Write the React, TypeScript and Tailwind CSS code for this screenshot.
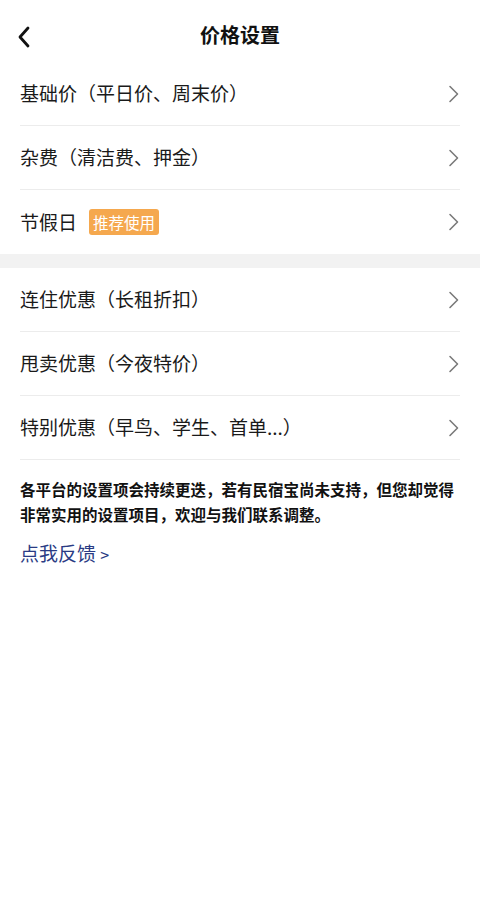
import { ReactNode } from "react";

const font = {
  fontFamily: '"Noto Sans CJK SC", "Noto Sans", sans-serif',
};

function Chevron() {
  return (
    <svg width="12" height="18" viewBox="0 0 12 18" fill="none">
      <path
        d="M2 1.5 L9.5 9 L2 16.5"
        stroke="#7a7a7a"
        strokeWidth="1.6"
        strokeLinecap="round"
        strokeLinejoin="round"
      />
    </svg>
  );
}

function Row({ children, last }: { children: ReactNode; last?: boolean }) {
  return (
    <div className="px-5">
      <div
        className={`flex h-16 items-center justify-between ${
          last ? "" : "border-b border-[#ececec]"
        }`}
      >
        <div className="flex items-center text-[19px] text-[#1a1a1a]">
          {children}
        </div>
        <Chevron />
      </div>
    </div>
  );
}

export default function App() {
  const groupA = ["基础价（平日价、周末价）", "杂费（清洁费、押金）"];
  const groupB = [
    "连住优惠（长租折扣）",
    "甩卖优惠（今夜特价）",
    "特别优惠（早鸟、学生、首单...）",
  ];

  return (
    <div className="min-h-[917px] w-[480px] bg-white" style={font}>
      <div className="relative flex h-[62px] items-start justify-center pt-[21px]">
        <svg
          className="absolute left-[17px] top-[26px]"
          width="14"
          height="22"
          viewBox="0 0 14 22"
          fill="none"
        >
          <path
            d="M11 2 L3 11 L11 20"
            stroke="#111"
            strokeWidth="2.8"
            strokeLinecap="round"
            strokeLinejoin="round"
          />
        </svg>
        <span className="text-[20px] font-bold leading-[28px] text-[#111]">
          价格设置
        </span>
      </div>

      {groupA.map((t) => (
        <Row key={t}>{t}</Row>
      ))}
      <Row last>
        节假日
        <span className="ml-[12px] rounded-[3px] bg-[#f5a84e] px-[4px] py-[1px] text-[15.5px] leading-[24px] text-white">
          推荐使用
        </span>
      </Row>

      <div className="h-[14px] bg-[#f2f2f2]" />

      {groupB.map((t) => (
        <Row key={t}>{t}</Row>
      ))}

      <div className="px-5 pt-[17px]">
        <p className="text-[15.5px] font-bold leading-[25px] text-[#111]">
          各平台的设置项会持续更迭，若有民宿宝尚未支持，但您却觉得非常实用的设置项目，欢迎与我们联系调整。
        </p>
        <div className="mt-[12px] text-[19px] text-[#2a3b84]">
          点我反馈 <span className="text-[16px]">&gt;</span>
        </div>
      </div>
    </div>
  );
}
